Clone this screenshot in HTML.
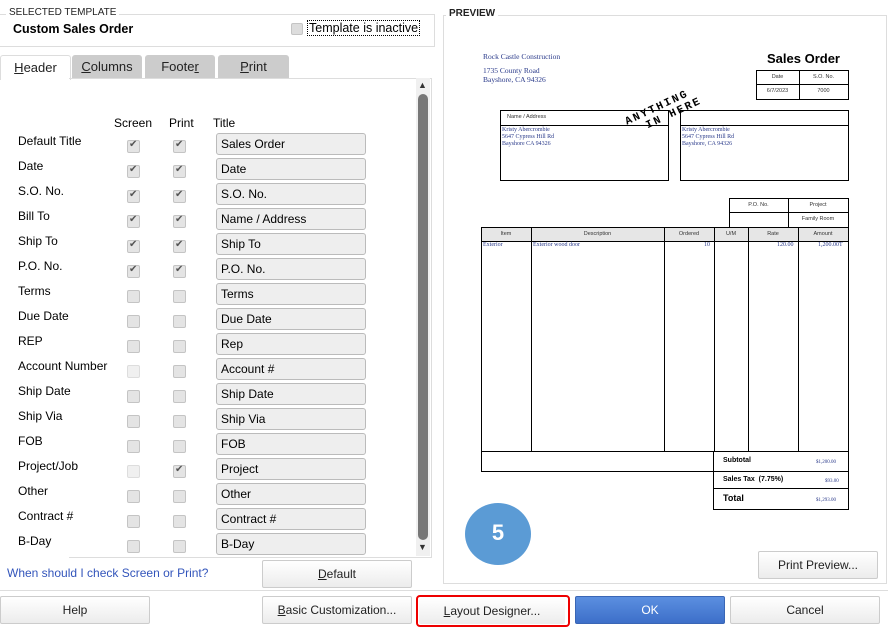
<!DOCTYPE html><html><head><style>
body{margin:0;width:888px;height:626px;background:#fff;font-family:"Liberation Sans",sans-serif;position:relative;overflow:hidden;font-size:12px;color:#000}
.a{position:absolute}
.lbl{position:absolute;left:18px;font-size:12px}
.cb{position:absolute;width:11px;height:11px;border:1px solid #c4c4c4;border-radius:2px;background:#e4e4e4}
.cb.k::after{content:"✔";position:absolute;left:1px;top:-2px;font-size:10px;color:#555}
.cb.d{background:#f0f0f0;border-color:#ddd}
.tf{position:absolute;left:216px;width:144px;height:20px;border:1px solid #bbb;border-radius:3px;background:#eee;font-size:12px;line-height:20px;padding-left:4px}
.btn{position:absolute;height:26px;border:1px solid #ccc;border-radius:2px;background:linear-gradient(#fff,#ececec);font-size:12px;text-align:center;line-height:26px;color:#222}
.tab{position:absolute;top:55px;height:23px;background:#ccc;border-radius:3px 3px 0 0;text-align:center;line-height:23px;font-size:13px;color:#222}
.p{position:absolute;border:1px solid #000;box-sizing:border-box}
.t{position:absolute;font-family:"Liberation Serif",serif;font-size:6px;color:#2a3a8a}
.h{position:absolute;font-size:5.5px;color:#333;text-align:center}
</style></head><body>
<div class="a" style="left:0;top:14px;width:434px;height:31px;border:1px solid #ddd;border-left:none"></div>
<div class="a" style="left:6px;top:7px;background:#fff;font-size:10px;padding:0 3px;color:#222">SELECTED TEMPLATE</div>
<div class="a" style="left:13px;top:22px;font-weight:bold;font-size:12.5px">Custom Sales Order</div>
<div class="cb" style="left:291px;top:23px;width:10px;height:10px;background:#ddd"></div>
<div class="a" style="left:307px;top:20px;font-size:12.5px;border:1px dotted #000;padding:0 1px">Template is inactive</div>
<div class="tab" style="left:0;width:69px;background:#fff;border:1px solid #ddd;border-bottom:none;height:24px"><u>H</u>eader</div>
<div class="tab" style="left:72px;width:70px"><u>C</u>olumns</div>
<div class="tab" style="left:145px;width:70px">Foote<u>r</u></div>
<div class="tab" style="left:218px;width:71px"><u>P</u>rint</div>
<div class="a" style="left:69px;top:78px;width:362px;height:478px;border-top:1px solid #ddd;border-right:1px solid #ddd;border-bottom:1px solid #ddd"></div>
<div class="a" style="left:416px;top:78px;width:14px;height:478px;background:#f0f0f0"></div>
<div class="a" style="left:418px;top:80px;font-size:9px;color:#333">▲</div>
<div class="a" style="left:418px;top:542px;font-size:9px;color:#333">▼</div>
<div class="a" style="left:418px;top:94px;width:10px;height:446px;background:#777;border-radius:5px"></div>
<div class="a" style="left:114px;top:116px">Screen</div>
<div class="a" style="left:169px;top:116px">Print</div>
<div class="a" style="left:213px;top:116px">Title</div>
<div id="rows"></div>
<script>
var r=[["Default Title","Sales Order",1,1],["Date","Date",1,1],["S.O. No.","S.O. No.",1,1],["Bill To","Name / Address",1,1],["Ship To","Ship To",1,1],["P.O. No.","P.O. No.",1,1],["Terms","Terms",0,0],["Due Date","Due Date",0,0],["REP","Rep",0,0],["Account Number","Account #",2,0],["Ship Date","Ship Date",0,0],["Ship Via","Ship Via",0,0],["FOB","FOB",0,0],["Project/Job","Project",2,1],["Other","Other",0,0],["Contract #","Contract #",0,0],["B-Day","B-Day",0,0]];
var h="";r.forEach(function(x,i){var y=133+i*25;
h+='<div class="lbl" style="top:'+(y+1)+'px">'+x[0]+'</div>';
h+='<div class="cb'+(x[2]==1?' k':x[2]==2?' d':'')+'" style="left:127px;top:'+(y+7)+'px"></div>';
h+='<div class="cb'+(x[3]?' k':'')+'" style="left:173px;top:'+(y+7)+'px"></div>';
h+='<div class="tf" style="top:'+y+'px">'+x[1]+'</div>';});
document.getElementById("rows").innerHTML=h;
</script>
<div class="a" style="left:7px;top:566px;color:#3355bb;font-size:12px">When should I check Screen or Print?</div>
<div class="btn" style="left:262px;top:560px;width:148px"><u>D</u>efault</div>
<div class="a" style="left:443px;top:15px;width:442px;height:567px;border:1px solid #ddd"></div>
<div class="a" style="left:446px;top:8px;background:#fff;font-size:10px;font-weight:bold;padding:0 3px;color:#222">PREVIEW</div>
<div class="t" style="left:483px;top:52px;font-size:7.5px">Rock Castle Construction</div>
<div class="t" style="left:483px;top:66px;font-size:7.5px;line-height:9px">1735 County Road<br>Bayshore, CA 94326</div>
<div class="a" style="left:767px;top:51px;font-weight:bold;font-size:13px">Sales Order</div>
<div class="p" style="left:756px;top:70px;width:93px;height:30px"></div>
<div class="a" style="left:799px;top:70px;width:1px;height:30px;background:#000"></div>
<div class="a" style="left:756px;top:84px;width:93px;height:1px;background:#000"></div>
<div class="h" style="left:756px;top:74px;width:43px">Date</div><div class="h" style="left:799px;top:74px;width:49px">S.O. No.</div>
<div class="h" style="left:756px;top:88px;width:43px">6/7/2023</div><div class="h" style="left:799px;top:88px;width:49px">7000</div>
<div class="p" style="left:500px;top:110px;width:169px;height:71px"></div>
<div class="a" style="left:500px;top:125px;width:169px;height:1px;background:#000"></div>
<div class="p" style="left:680px;top:110px;width:169px;height:71px"></div>
<div class="a" style="left:680px;top:125px;width:169px;height:1px;background:#000"></div>
<div class="h" style="left:507px;top:114px">Name / Address</div>
<div class="t" style="left:502px;top:127px;line-height:7px">Kristy Abercrombie<br>5647 Cypress Hill Rd<br>Bayshore CA 94326</div>
<div class="t" style="left:682px;top:127px;line-height:7px">Kristy Abercrombie<br>5647 Cypress Hill Rd<br>Bayshore, CA 94326</div>
<div class="a" style="left:625px;top:100px;font-size:11px;font-weight:bold;transform:rotate(-25deg);letter-spacing:2px;font-family:'Liberation Mono',monospace">ANYTHING<br>&nbsp;&nbsp;IN HERE</div>
<div class="p" style="left:729px;top:198px;width:120px;height:30px"></div>
<div class="a" style="left:788px;top:198px;width:1px;height:30px;background:#000"></div>
<div class="a" style="left:729px;top:212px;width:120px;height:1px;background:#000"></div>
<div class="h" style="left:729px;top:202px;width:59px">P.O. No.</div><div class="h" style="left:788px;top:202px;width:60px">Project</div>
<div class="h" style="left:788px;top:216px;width:60px">Family Room</div>
<div class="p" style="left:481px;top:227px;width:368px;height:245px"></div>
<div class="a" style="left:482px;top:228px;width:366px;height:13px;background:#e6e6e6;border-bottom:1px solid #000"></div>
<div class="a" style="left:531px;top:227px;width:1px;height:225px;background:#000"></div>
<div class="a" style="left:664px;top:227px;width:1px;height:225px;background:#000"></div>
<div class="a" style="left:714px;top:227px;width:1px;height:225px;background:#000"></div>
<div class="a" style="left:748px;top:227px;width:1px;height:225px;background:#000"></div>
<div class="a" style="left:798px;top:227px;width:1px;height:225px;background:#000"></div>
<div class="a" style="left:481px;top:451px;width:368px;height:1px;background:#000"></div>
<div class="h" style="left:481px;top:231px;width:50px">Item</div><div class="h" style="left:531px;top:231px;width:133px">Description</div><div class="h" style="left:664px;top:231px;width:50px">Ordered</div><div class="h" style="left:714px;top:231px;width:34px">U/M</div><div class="h" style="left:748px;top:231px;width:50px">Rate</div><div class="h" style="left:798px;top:231px;width:50px">Amount</div>
<div class="t" style="left:483px;top:242px">Exterior</div><div class="t" style="left:533px;top:242px">Exterior wood door</div>
<div class="t" style="left:704px;top:242px">10</div><div class="t" style="left:777px;top:242px">120.00</div><div class="t" style="left:818px;top:242px">1,200.00T</div>
<div class="p" style="left:713px;top:451px;width:136px;height:59px"></div>
<div class="a" style="left:713px;top:471px;width:136px;height:1px;background:#000"></div>
<div class="a" style="left:713px;top:488px;width:136px;height:1px;background:#000"></div>
<div class="a" style="left:723px;top:457px;font-size:7px;font-weight:bold">Subtotal</div>
<div class="a" style="left:723px;top:476px;font-size:7px;font-weight:bold">Sales Tax &nbsp;(7.75%)</div>
<div class="a" style="left:723px;top:493px;font-size:9px;font-weight:bold">Total</div>
<div class="t" style="left:816px;top:460px;font-size:5px">$1,200.00</div>
<div class="t" style="left:825px;top:479px;font-size:5px">$93.00</div>
<div class="t" style="left:816px;top:498px;font-size:5px">$1,293.00</div>
<div class="a" style="left:465px;top:503px;width:66px;height:62px;border-radius:50%;background:#5b9bd5;color:#fff;font-weight:bold;font-size:22px;text-align:center;line-height:60px">5</div>
<div class="btn" style="left:758px;top:551px;width:118px">Print Preview...</div>
<div class="a" style="left:0;top:590px;width:888px;height:1px;background:#ddd"></div>
<div class="btn" style="left:0;top:596px;width:148px">Help</div>
<div class="btn" style="left:262px;top:596px;width:148px"><u>B</u>asic Customization...</div>
<div class="a" style="left:416px;top:595px;width:150px;height:28px;border:2px solid #e00;border-radius:4px"></div>
<div class="btn" style="left:419px;top:598px;width:146px;border:none;height:26px"><u>L</u>ayout Designer...</div>
<div class="btn" style="left:575px;top:596px;width:148px;background:linear-gradient(#5b8fe0,#3d6fc9);border-color:#3a66b5;color:#fff">OK</div>
<div class="btn" style="left:730px;top:596px;width:148px">Cancel</div>
</body></html>
